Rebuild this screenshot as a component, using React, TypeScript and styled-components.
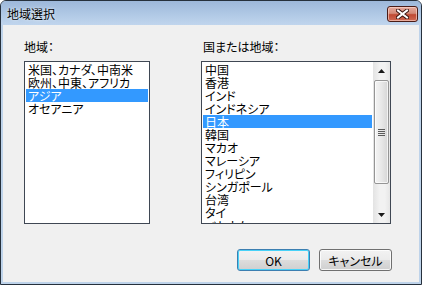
import * as React from "react";
import styled, {createGlobalStyle} from "styled-components";

const GlobalStyle = createGlobalStyle`
    html, body {
        margin: 0;
        padding: 0;
        background: #ffffff;
    }

    body {
        font-family: "Noto Sans CJK JP", "DejaVu Sans", sans-serif;
        font-size: 12px;
        font-feature-settings: "palt";
        color: #000000;
    }
`;

const Window = styled.div`
    width: 422px;
    height: 285px;
    box-sizing: border-box;
    border: 1px solid #26303c;
    border-radius: 6px 6px 0 0;
    background: #bed3ea;
    display: flex;
    flex-direction: column;
    overflow: hidden;
`;

const TitleBar = styled.div`
    height: 24px;
    flex: none;
    display: flex;
    align-items: center;
    justify-content: space-between;
    padding: 0 3px 0 6px;
    background: linear-gradient(#9db8da, #b2cae6 60%, #c0d5ed);
`;

const Title = styled.span`
    font-size: 12px;
    line-height: 13px;
    color: #000000;
    font-feature-settings: normal;
    text-shadow: 0 0 3px rgba(255, 255, 255, 0.9);
`;

const CloseButton = styled.div`
    width: 31px;
    height: 16px;
    margin-top: 1px;
    box-sizing: border-box;
    border: 1px solid #4a1c16;
    border-radius: 3px;
    background: linear-gradient(#e6aa9c, #d48a78 45%, #c04a33 55%, #cf6a54);
    box-shadow: inset 0 0 0 1px rgba(255, 220, 210, 0.6);
    display: flex;
    align-items: center;
    justify-content: center;
`;

const Body = styled.div`
    flex: 1;
    margin: 0 2px 2px 2px;
    background: #f0f0f0;
    padding: 15px 27px 0 21px;
    display: flex;
    flex-direction: column;
`;

const Columns = styled.div`
    display: flex;
    gap: 51px;
`;

const Column = styled.div<{ $width: number }>`
    width: ${p => p.$width}px;
    display: flex;
    flex-direction: column;
    gap: 8px;
`;

const Label = styled.div<{ $indent?: number }>`
    height: 13px;
    line-height: 13px;
    padding-left: ${p => p.$indent || 0}px;
    white-space: nowrap;
`;

const ListBox = styled.div`
    height: 163px;
    box-sizing: border-box;
    border: 1px solid #3f4753;
    background: #ffffff;
    display: flex;
    overflow: hidden;
`;

const Items = styled.div`
    flex: 1;
    padding: 1px;
    overflow: hidden;
`;

const Item = styled.div<{ $selected?: boolean }>`
    height: 13px;
    line-height: 13px;
    padding-left: 2px;
    white-space: nowrap;
    background: ${p => p.$selected ? "#3399ff" : "transparent"};
    color: ${p => p.$selected ? "#ffffff" : "#000000"};
`;

const ScrollBar = styled.div`
    width: 17px;
    flex: none;
    display: flex;
    flex-direction: column;
    background: linear-gradient(90deg, #e3e3e3, #f2f2f2 40%, #f2f2f2 70%, #e6e6e6);
`;

const ArrowButton = styled.div`
    height: 17px;
    flex: none;
    display: flex;
    align-items: center;
    justify-content: center;
`;

const Track = styled.div`
    flex: 1;
    padding-top: 1px;
`;

const Thumb = styled.div`
    height: 104px;
    box-sizing: border-box;
    margin: 0 1px;
    border: 1px solid #959595;
    border-radius: 2px;
    background: linear-gradient(90deg, #f4f4f4, #e8e8e8 50%, #d6d6d6);
    box-shadow: inset 0 0 0 1px rgba(255, 255, 255, 0.7);
    display: flex;
    align-items: center;
    justify-content: center;
`;

const ButtonRow = styled.div`
    margin-top: 25px;
    display: flex;
    justify-content: flex-end;
    gap: 9px;
`;

const Button = styled.div<{ $default?: boolean }>`
    width: 73px;
    height: 22px;
    box-sizing: border-box;
    border: 1px solid ${p => p.$default ? "#3c7fb1" : "#707070"};
    border-radius: 3px;
    background: linear-gradient(#f2f2f2, #ebebeb 50%, #dddddd 51%, #cfcfcf);
    box-shadow: inset 0 0 0 1px ${p => p.$default ? "#48d2f8" : "rgba(255, 255, 255, 0.8)"};
    display: flex;
    align-items: center;
    justify-content: center;
    line-height: 13px;
`;

const regions = ["米国、カナダ、中南米", "欧州、中東、アフリカ", "アジア", "オセアニア"];
const countries = [
    "中国", "香港", "インド", "インドネシア", "日本", "韓国", "マカオ",
    "マレーシア", "フィリピン", "シンガポール", "台湾", "タイ", "ベトナム",
];

const CloseIcon = () =>
    <svg width="13" height="10" viewBox="0 0 13 10">
        <path d="M2 1.5 L11 8.5 M11 1.5 L2 8.5" stroke="#3a1410" strokeWidth="4" strokeLinecap="square"/>
        <path d="M2 1.5 L11 8.5 M11 1.5 L2 8.5" stroke="#ffffff" strokeWidth="2" strokeLinecap="square"/>
    </svg>;

const Arrow = ({down}: { down?: boolean }) =>
    <svg width="7" height="4" viewBox="0 0 7 4">
        <path d={down ? "M0 0 H7 L3.5 4 Z" : "M0 4 H7 L3.5 0 Z"} fill="#1a1a1a"/>
    </svg>;

const Grip = () =>
    <svg width="7" height="7" viewBox="0 0 7 7">
        <path d="M0 0.5 H7 M0 2.5 H7 M0 4.5 H7 M0 6.5 H7" stroke="#5a5a5a" strokeWidth="1"/>
    </svg>;

export default function App() {
    return <>
        <GlobalStyle/>
        <Window>
            <TitleBar>
                <Title>地域選択</Title>
                <CloseButton><CloseIcon/></CloseButton>
            </TitleBar>
            <Body>
                <Columns>
                    <Column $width={126}>
                        <Label>地域：</Label>
                        <ListBox>
                            <Items>
                                {regions.map(r => <Item key={r} $selected={r === "アジア"}>{r}</Item>)}
                            </Items>
                        </ListBox>
                    </Column>
                    <Column $width={190}>
                        <Label $indent={2}>国または地域：</Label>
                        <ListBox>
                            <Items>
                                {countries.map(c => <Item key={c} $selected={c === "日本"}>{c}</Item>)}
                            </Items>
                            <ScrollBar>
                                <ArrowButton><Arrow/></ArrowButton>
                                <Track>
                                    <Thumb><Grip/></Thumb>
                                </Track>
                                <ArrowButton><Arrow down/></ArrowButton>
                            </ScrollBar>
                        </ListBox>
                    </Column>
                </Columns>
                <ButtonRow>
                    <Button $default>OK</Button>
                    <Button>キャンセル</Button>
                </ButtonRow>
            </Body>
        </Window>
    </>;
}
